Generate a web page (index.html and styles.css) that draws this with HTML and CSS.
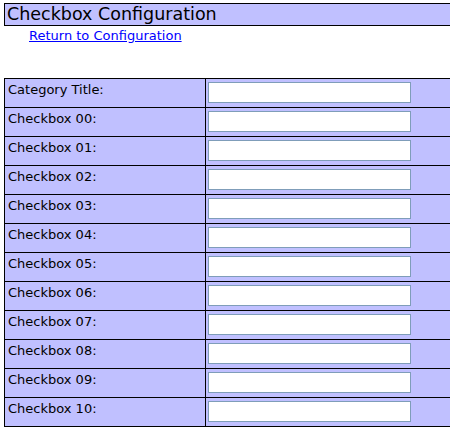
FILE: index.html
```html
<!DOCTYPE html>
<html lang="en">
<head>
<meta charset="UTF-8">
<title>Checkbox Configuration</title>
<link rel="stylesheet" href="styles.css">
</head>
<body>

<!-- header -->
<div class="page-title">Checkbox Configuration</div>
<div class="back-link"><a href="#">Return to Configuration</a></div>

<!-- config form -->
<form class="config-form">
<table class="config-table">
  <tr><td class="label">Category Title:</td><td class="field"><input type="text"></td></tr>
  <tr><td class="label">Checkbox 00:</td><td class="field"><input type="text"></td></tr>
  <tr><td class="label">Checkbox 01:</td><td class="field"><input type="text"></td></tr>
  <tr><td class="label">Checkbox 02:</td><td class="field"><input type="text"></td></tr>
  <tr><td class="label">Checkbox 03:</td><td class="field"><input type="text"></td></tr>
  <tr><td class="label">Checkbox 04:</td><td class="field"><input type="text"></td></tr>
  <tr><td class="label">Checkbox 05:</td><td class="field"><input type="text"></td></tr>
  <tr><td class="label">Checkbox 06:</td><td class="field"><input type="text"></td></tr>
  <tr><td class="label">Checkbox 07:</td><td class="field"><input type="text"></td></tr>
  <tr><td class="label">Checkbox 08:</td><td class="field"><input type="text"></td></tr>
  <tr><td class="label">Checkbox 09:</td><td class="field"><input type="text"></td></tr>
  <tr><td class="label">Checkbox 10:</td><td class="field"><input type="text"></td></tr>
</table>
</form>

</body>
</html>
```

FILE: styles.css
```css
/* page */
html {
  overflow: hidden;
}

body {
  margin: 3px 0 0 4px;
  font-family: "DejaVu Sans", Verdana, sans-serif;
  font-size: 13px;
  color: #000;
  background: #fff;
}

/* title bar */
.page-title {
  width: 520px;
  height: 21px;
  line-height: 21px;
  padding-left: 2px;
  border: 1px solid #000;
  background: #c0c0ff;
  font-size: 17.5px;
}

.back-link {
  margin: 2px 0 0 25px;
  line-height: 16px;
}

.back-link a {
  color: #00f;
}

/* table */
.config-form {
  margin: 34px 0 0 0;
}

.config-table {
  width: 520px;
  border-collapse: collapse;
  background: #c0c0ff;
}

.config-table td {
  height: 28px;
  padding: 0;
  border: 1px solid #000;
  vertical-align: top;
}

.config-table .label {
  width: 197px;
  padding-left: 3px;
  line-height: 22px;
}

.config-table .field {
  padding: 3px 0 0 2px;
  height: 25px;
}

.config-table input {
  display: block;
  box-sizing: border-box;
  width: 203px;
  height: 21px;
  margin: 0;
  border: 1px solid #7f9db9;
  background: #fff;
  font-family: inherit;
  font-size: 13px;
}
```
